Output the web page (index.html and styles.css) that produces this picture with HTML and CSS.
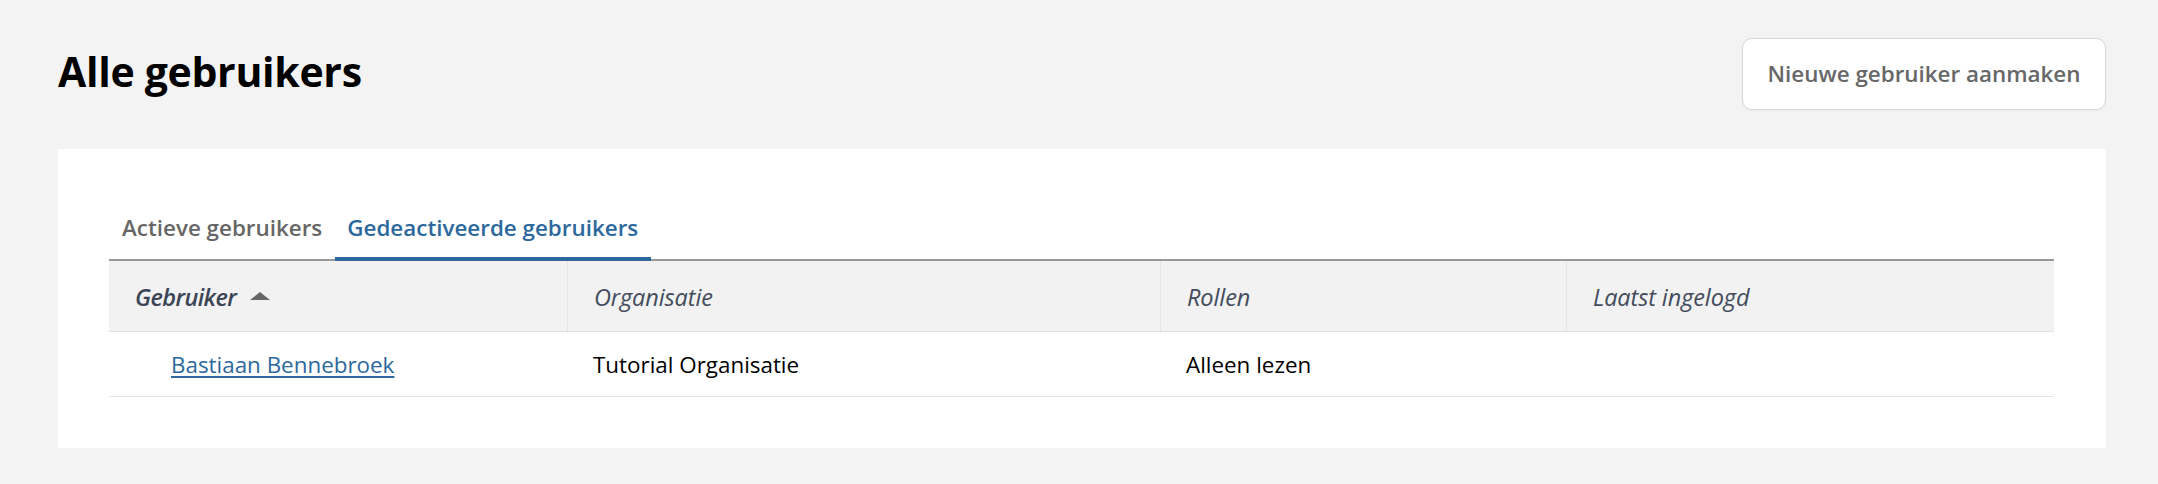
FILE: index.html
```html
<!DOCTYPE html>
<html lang="nl">
<head>
<meta charset="utf-8">
<title>Alle gebruikers</title>
<link rel="stylesheet" href="styles.css">
</head>
<body>
<main class="page">
  <header class="page-header">
    <h1 class="page-title">Alle gebruikers</h1>
    <button class="btn" type="button">Nieuwe gebruiker aanmaken</button>
  </header>
  <section class="panel">
    <nav class="tabs">
      <a class="tab" href="#">Actieve gebruikers</a>
      <a class="tab tab-active" href="#">Gedeactiveerde gebruikers</a>
    </nav>
    <div class="table">
      <div class="row row-head">
        <div class="cell th th-sorted">Gebruiker<span class="sort-up"></span></div>
        <div class="cell th">Organisatie</div>
        <div class="cell th">Rollen</div>
        <div class="cell th">Laatst ingelogd</div>
      </div>
      <div class="row row-body">
        <div class="cell td td-user"><a class="user-link" href="#">Bastiaan Bennebroek</a></div>
        <div class="cell td">Tutorial Organisatie</div>
        <div class="cell td">Alleen lezen</div>
        <div class="cell td"></div>
      </div>
    </div>
  </section>
</main>
</body>
</html>
```
FILE: styles.css
```css
* { box-sizing: border-box; }

html, body {
  margin: 0;
  background: #f3f3f3;
}

body {
  font-family: "Open Sans", "Noto Sans", sans-serif;
  font-size: 22.4px;
  line-height: 30px;
  color: #000;
}

.page {
  padding: 38px 52px 0 58px;
}

.page-header {
  display: flex;
  justify-content: space-between;
  align-items: flex-start;
  margin-bottom: 39px;
}

.page-title {
  margin: 5px 0 0;
  font-size: 41px;
  line-height: 56px;
  font-weight: 700;
  letter-spacing: -0.3px;
  color: #000;
}

.btn {
  font-family: inherit;
  font-size: 22.4px;
  line-height: 30px;
  font-weight: 600;
  color: #676767;
  background: #fff;
  border: 1px solid #d3d7de;
  border-radius: 10px;
  padding: 20px 0;
  width: 364px;
  text-align: center;
  box-shadow: 0 1px 2px rgba(0, 0, 0, 0.04);
  cursor: pointer;
}

.panel {
  background: #fff;
  padding: 51px 52px 51px 51px;
}

.tabs {
  display: flex;
  border-bottom: 2px solid #999;
}

.tab {
  display: block;
  padding: 13px 12.5px 14px;
  border-bottom: 4px solid transparent;
  margin-bottom: -2px;
  font-size: 22.4px;
  font-weight: 600;
  color: #666;
  text-decoration: none;
}

.tab:first-child {
  padding-left: 13px;
}

.tab-active {
  color: #2c689c;
  border-bottom-color: #2c689c;
}

.row {
  display: grid;
  grid-template-columns: 458px 593px 406px 1fr;
}

.row-head {
  background: #f2f2f2;
  border-bottom: 1px solid #e2e2e2;
}

.row-body {
  border-bottom: 1px solid #e4e4e4;
}

.cell {
  padding-left: 26px;
  padding-right: 26px;
}

.th {
  padding-top: 21px;
  padding-bottom: 19px;
  font-size: 23.5px;
  letter-spacing: -0.1px;
  font-style: italic;
  font-weight: 400;
  color: #424c5c;
  border-left: 1px solid #e4e4e4;
}

.th:first-child {
  border-left: none;
}

.th-sorted {
  font-weight: 600;
  letter-spacing: -0.6px;
  color: #3b4556;
}

.sort-up {
  display: inline-block;
  width: 0;
  height: 0;
  margin-left: 14px;
  border-left: 10px solid transparent;
  border-right: 10px solid transparent;
  border-bottom: 8px solid #666;
  vertical-align: 6px;
}

.td {
  padding-top: 18px;
  padding-bottom: 16px;
  color: #000;
}

.td-user {
  padding-left: 62px;
}

.user-link {
  color: #2c689c;
  text-decoration: underline;
  text-underline-offset: 3px;
}
```
